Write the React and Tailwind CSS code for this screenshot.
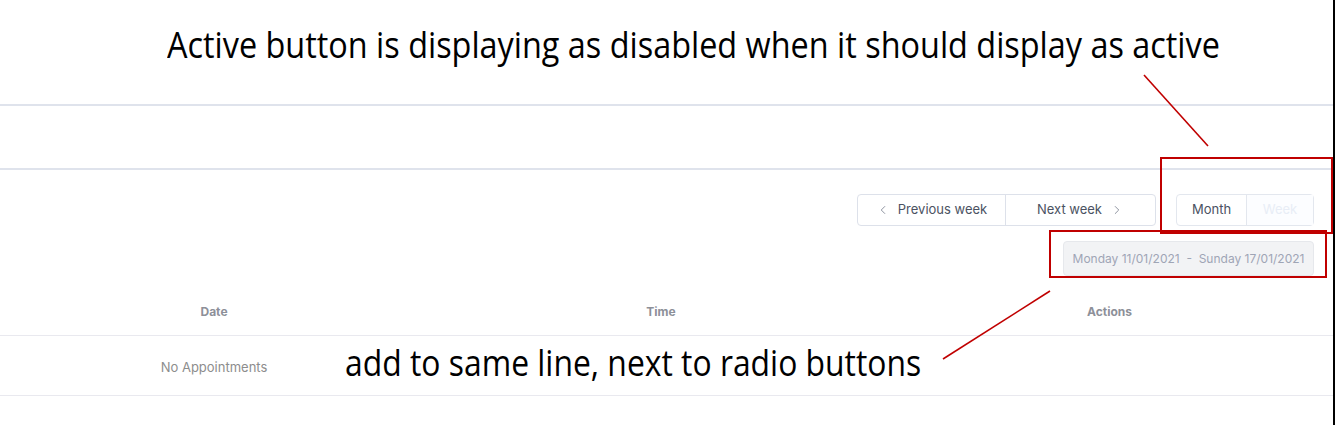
import React from 'react';
import { ChevronLeft, ChevronRight } from 'lucide-react';

const uiFont = { fontFamily: 'Inter, "Noto Sans", sans-serif' };
const noteFont = { fontFamily: '"Open Sans", "Noto Sans", sans-serif' };

const App = () => {
  return (
    <div className="relative w-[1335px] h-[425px] bg-white overflow-hidden flex" style={uiFont}>
      {/* Page */}
      <div className="w-[1333px] flex flex-col">
        <div className="h-[104px]" />
        <div className="h-[66px] border-t-2 border-b-2 border-[#dfe3ec]" />

        {/* Toolbar */}
        <div className="flex justify-end gap-5 pr-[19px] pt-6">
          <div className="flex h-8 rounded border border-[#dde1ea] text-[13px] text-[#4b5262]">
            <button className="w-[148px] flex items-center justify-center gap-2 border-r border-[#dde1ea]">
              <ChevronLeft size={14} strokeWidth={1.5} className="text-[#7f8592]" />
              Previous week
            </button>
            <button className="w-[149px] flex items-center justify-center gap-2">
              Next week
              <ChevronRight size={14} strokeWidth={1.5} className="text-[#7f8592]" />
            </button>
          </div>
          <div className="flex h-8 rounded border border-[#e3e7ee] text-[13px]">
            <button className="w-[70px] flex items-center justify-center text-[#4b5262] border-r border-[#e3e7ee]">
              Month
            </button>
            <button className="w-[66px] flex items-center justify-center text-[#e8edf6] bg-[#fcfdff]">
              Week
            </button>
          </div>
        </div>

        <div className="flex justify-end pr-[19px] mt-[15px]">
          <div className="w-[251px] h-[35px] flex items-center justify-center rounded bg-[#f2f3f5] border border-[#e6e8ec] text-[12px] text-[#9fa5b5]">
            Monday 11/01/2021&nbsp;&nbsp;-&nbsp;&nbsp;Sunday 17/01/2021
          </div>
        </div>

        {/* Table */}
        <div className="mt-3">
          <div className="grid grid-cols-[428px_466px_1fr] h-12 items-center border-b border-[#e9e9ef] text-xs font-bold text-[#8d9099]">
            <div className="text-center">Date</div>
            <div className="text-center">Time</div>
            <div className="text-center pr-2">Actions</div>
          </div>
          <div className="grid grid-cols-[428px_466px_1fr] h-[60px] items-center border-b border-[#e9e9ef] text-[13px] text-[#8d8d8d]">
            <div className="text-center pt-1">No Appointments</div>
            <div />
            <div />
          </div>
        </div>
      </div>
      <div className="w-[2px] h-full bg-black" />

      {/* Annotations */}
      <div className="absolute left-[167px] top-[27px] text-[36px] leading-none text-black whitespace-nowrap origin-left scale-x-[0.9]" style={noteFont}>
        Active button is displaying as disabled when it should display as active
      </div>
      <div className="absolute left-[345px] top-[345px] text-[36px] leading-none text-black whitespace-nowrap origin-left scale-x-[0.885]" style={noteFont}>
        add to same line, next to radio buttons
      </div>
      <div className="absolute left-[1160px] top-[157px] w-[173px] h-[77px] border-2 border-[#c00000]" />
      <div className="absolute left-[1049px] top-[230px] w-[278px] h-[48px] border-2 border-[#c00000]" />
      <svg className="absolute left-0 top-0 pointer-events-none" width="1335" height="425">
        <line x1="1144" y1="75" x2="1208" y2="146" stroke="#c00000" strokeWidth="1.6" />
        <line x1="1050" y1="291" x2="943" y2="359" stroke="#c00000" strokeWidth="1.6" />
      </svg>
    </div>
  );
};

export default App;
